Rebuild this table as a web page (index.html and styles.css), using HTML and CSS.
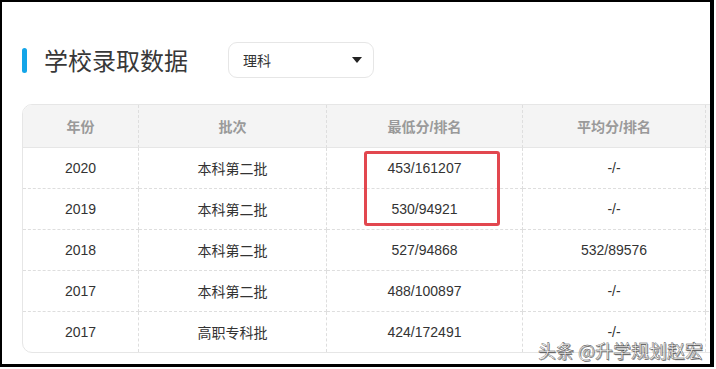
FILE: index.html
```html
<!DOCTYPE html>
<html lang="zh">
<head>
<meta charset="utf-8">
<link rel="stylesheet" href="styles.css">
</head>
<body>
<div class="frame">
  <div class="heading">
    <span class="bar"></span>
    <h1 class="title">学校录取数据</h1>
    <div class="select">
      <span>理科</span>
      <span class="caret"></span>
    </div>
  </div>
  <div class="table">
    <div class="cell head">年份</div>
    <div class="cell head">批次</div>
    <div class="cell head">最低分/排名</div>
    <div class="cell head">平均分/排名</div>
    <div class="cell head"></div>

    <div class="cell">2020</div>
    <div class="cell">本科第二批</div>
    <div class="cell">453/161207</div>
    <div class="cell">-/-</div>
    <div class="cell"></div>

    <div class="cell">2019</div>
    <div class="cell">本科第二批</div>
    <div class="cell">530/94921</div>
    <div class="cell">-/-</div>
    <div class="cell"></div>

    <div class="cell">2018</div>
    <div class="cell">本科第二批</div>
    <div class="cell">527/94868</div>
    <div class="cell">532/89576</div>
    <div class="cell"></div>

    <div class="cell">2017</div>
    <div class="cell">本科第二批</div>
    <div class="cell">488/100897</div>
    <div class="cell">-/-</div>
    <div class="cell"></div>

    <div class="cell last">2017</div>
    <div class="cell last">高职专科批</div>
    <div class="cell last">424/172491</div>
    <div class="cell last">-/-</div>
    <div class="cell last"></div>
  </div>
  <div class="highlight"></div>
  <div class="watermark">头条 @升学规划赵宏</div>
</div>
</body>
</html>
```

FILE: styles.css
```css
html, body {
  margin: 0;
  padding: 0;
  background: #fff;
}

.frame {
  position: relative;
  box-sizing: border-box;
  width: 714px;
  height: 367px;
  border-style: solid;
  border-color: #000;
  border-width: 2px 4px 3px 2px;
  overflow: hidden;
  padding: 40px 0 0 20px;
  font-family: "Liberation Sans", "Noto Sans CJK SC", sans-serif;
  color: #333;
}

.heading {
  display: flex;
  align-items: center;
  height: 36px;
}

.bar {
  width: 5px;
  height: 25px;
  border-radius: 3px;
  background: #14a5e8;
  margin-right: 17px;
}

.title {
  margin: 0 40px 0 0;
  font-family: "Noto Sans CJK SC", sans-serif;
  font-weight: 400;
  font-size: 24px;
  line-height: 30px;
  color: #383838;
}

.select {
  box-sizing: border-box;
  width: 146px;
  height: 36px;
  border: 1px solid #e6e6e6;
  border-radius: 9px;
  display: flex;
  align-items: center;
  justify-content: space-between;
  padding: 0 11px 0 14px;
  font-family: "Noto Sans CJK SC", sans-serif;
  font-size: 14px;
  color: #333;
}

.caret {
  width: 0;
  height: 0;
  border-left: 5px solid transparent;
  border-right: 5px solid transparent;
  border-top: 6px solid #222;
}

.table {
  margin-top: 26px;
  width: 900px;
  border: 1px solid #e6e6e6;
  border-radius: 10px;
  overflow: hidden;
  display: grid;
  grid-template-columns: 116px 188px 196px 183px 216px;
  font-size: 14px;
}

.cell {
  box-sizing: border-box;
  height: 41px;
  display: flex;
  align-items: center;
  justify-content: center;
  border-right: 1px dashed #dedede;
  border-bottom: 1px dashed #dedede;
  color: #333;
  font-family: "Liberation Sans", "Noto Sans CJK SC", sans-serif;
}

.cell.head {
  height: 43px;
  background: #f4f4f4;
  color: #9a9a9a;
  font-weight: 700;
  border-bottom: 1px solid #e6e6e6;
  padding-bottom: 1px;
}

.cell.last {
  height: 40px;
  border-bottom: none;
}

.highlight {
  position: absolute;
  left: 362px;
  top: 149px;
  box-sizing: border-box;
  width: 136px;
  height: 75px;
  border: 3px solid #e2474f;
  border-radius: 3px;
}

.watermark {
  position: absolute;
  left: 536px;
  top: 337px;
  font-family: "Noto Sans CJK SC", sans-serif;
  font-size: 18px;
  line-height: 22px;
  color: #fafafa;
  -webkit-text-stroke: 0.35px #333;
  text-shadow: 1px 1px 0 rgba(0,0,0,0.45);
  white-space: nowrap;
}
```
